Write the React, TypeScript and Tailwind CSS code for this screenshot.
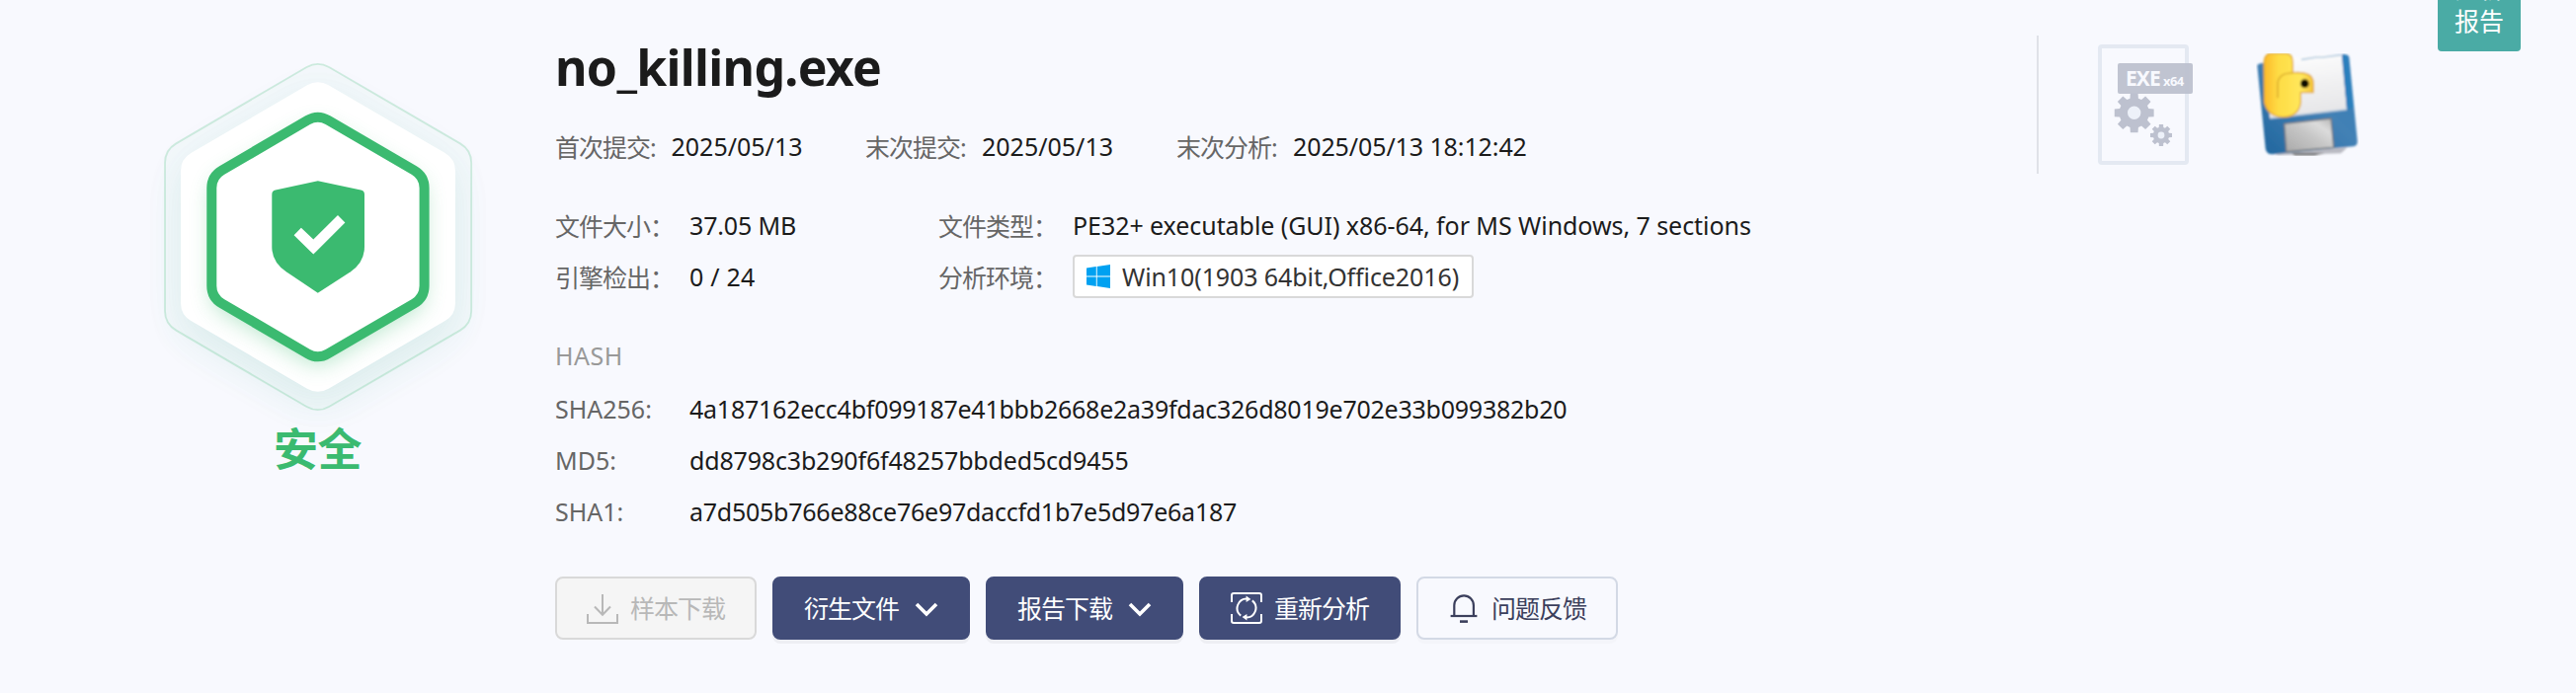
import type { ReactNode } from "react";

const LATIN = "text-[25px] leading-8 whitespace-pre text-[#1b1b1b]";
const LABEL = "pt-0.5 text-[25px] leading-8 font-[370] tracking-[-1px] whitespace-pre text-[#666]";

function SafeBadge() {
  return (
    <svg viewBox="0 0 400 420" className="block h-[420px] w-[400px]">
      <defs>
        <filter id="soft" x="-30%" y="-30%" width="160%" height="160%">
          <feGaussianBlur stdDeviation="20" />
        </filter>
        <filter id="glow" x="-30%" y="-30%" width="160%" height="160%">
          <feGaussianBlur stdDeviation="11" />
        </filter>
        <path
          id="plate"
          d="M63 133 Q63 121 73.4 115 L191 46.3 Q201.8 40 212.6 46.3 L330.6 115 Q341 121 341 133 L341 267 Q341 279 330.6 285 L212.6 353.7 Q201.8 360 191 353.7 L73.4 285 Q63 279 63 267 Z"
        />
        <path
          id="ring"
          d="M94.3 150.5 Q94.3 138.5 104.7 132.5 L191.4 81.8 Q201.8 75.6 212.2 81.8 L299.2 132.5 Q309.6 138.5 309.6 150.5 L309.6 249.5 Q309.6 261.5 299.2 267.5 L212.2 318.2 Q201.8 324.4 191.4 318.2 L104.7 267.5 Q94.3 261.5 94.3 249.5 Z"
        />
      </defs>
      <use href="#plate" transform="translate(0 16)" fill="#3bba70" opacity="0.07" filter="url(#soft)" />
      <use href="#plate" transform="translate(0 10)" fill="#3b8cba" opacity="0.07" filter="url(#soft)" />
      <path
        d="M47 125 Q47 112 58.3 105.4 L190.5 28 Q201.8 21.6 213.1 28 L345.9 105.4 Q357.2 112 357.2 125 L357.2 275 Q357.2 288 345.9 294.6 L213.1 372 Q201.8 378.4 190.5 372 L58.3 294.6 Q47 288 47 275 Z"
        fill="#3bba70"
        fillOpacity="0.02"
        stroke="#3bba70"
        strokeOpacity="0.22"
        strokeWidth="1.8"
      />
      <use href="#plate" fill="#fff" />
      <use href="#ring" transform="translate(0 8)" fill="#3bba70" opacity="0.36" filter="url(#glow)" />
      <use href="#ring" fill="#fff" stroke="#3bba70" strokeWidth="10" />
      <path
        d="M201.8 143.2 L245.4 152.5 Q249 153.4 249 157 V210 Q249 225.5 235 235.3 L201.8 256.8 L169.8 235.3 Q155.3 225.5 155.3 210 V157 Q155.3 153.4 158.9 152.5 Z"
        fill="#3bba70"
      />
      <path d="M177.6 198.2 L184.9 190.8 L197.3 202.6 L222 178 L229.4 185.4 L197.3 217.6 Z" fill="#fff" />
    </svg>
  );
}

function gearPath(cx: number, cy: number, outer: number, inner: number, hole: number) {
  const points: string[] = [];
  for (let i = 0; i < 8; i++) {
    const a = (i * Math.PI) / 4;
    const corners: [number, number][] = [
      [-0.28, inner],
      [-0.19, outer],
      [0.19, outer],
      [0.28, inner],
    ];
    for (const [d, r] of corners) {
      points.push(`${(cx + r * Math.cos(a + d)).toFixed(2)} ${(cy + r * Math.sin(a + d)).toFixed(2)}`);
    }
  }
  return `M${points.join("L")}Z M${cx + hole} ${cy}a${hole} ${hole} 0 1 0 ${-2 * hole} 0a${hole} ${hole} 0 1 0 ${2 * hole} 0Z`;
}

function ExeIcon() {
  return (
    <div className="relative h-[122px] w-[92px] rounded-[4px] border-4 border-[#e4e9f2]">
      <div className="absolute top-[15px] left-4 flex h-[31px] w-[76px] items-baseline rounded-[2px] bg-[#bdc1cf]/95 pl-[8px] font-bold text-[#f8f9fe]">
        <span className="text-[21px] leading-[31px] tracking-[-0.9px]">EXE</span>
        <span className="ml-[3px] text-[13px] leading-[31px] tracking-[-0.5px]">x64</span>
      </div>
      <svg viewBox="0 0 84 114" className="absolute top-0 left-0 h-[114px] w-[84px]">
        <circle cx="32.7" cy="65.3" r="8" fill="#edf1f9" />
        <circle cx="60" cy="88" r="4" fill="#edf1f9" />
        <path d={gearPath(32.7, 65.3, 20.3, 15.2, 6.7)} fill="#bdc1cf" fillRule="evenodd" />
        <path d={gearPath(60, 88, 11.2, 8.2, 3.4)} fill="#bdc1cf" fillRule="evenodd" />
      </svg>
    </div>
  );
}

function FloppyIcon() {
  return (
    <svg viewBox="42 42 312 312" className="block size-[104px]">
      <defs>
        <linearGradient id="disk" x1="0" y1="1" x2="1" y2="0">
          <stop offset="0" stopColor="#1f659d" />
          <stop offset="0.55" stopColor="#4381b5" />
          <stop offset="1" stopColor="#2f7cb8" />
        </linearGradient>
        <linearGradient id="paper" x1="0" y1="0" x2="0.2" y2="1">
          <stop offset="0" stopColor="#ffffff" />
          <stop offset="1" stopColor="#e6e6e8" />
        </linearGradient>
        <linearGradient id="metal" x1="0" y1="1" x2="1" y2="0">
          <stop offset="0" stopColor="#a9a9a9" />
          <stop offset="0.5" stopColor="#c6c6c6" />
          <stop offset="0.75" stopColor="#dcdcdc" />
          <stop offset="1" stopColor="#b4b4b4" />
        </linearGradient>
        <linearGradient id="snake" x1="0" y1="0" x2="1" y2="0">
          <stop offset="0" stopColor="#fdb92a" />
          <stop offset="0.3" stopColor="#fedd45" />
          <stop offset="0.75" stopColor="#ffe75c" />
          <stop offset="1" stopColor="#f6c53a" />
        </linearGradient>
        <filter id="edge" x="-5%" y="-5%" width="110%" height="110%">
          <feGaussianBlur stdDeviation="3" />
        </filter>
      </defs>
      <g filter="url(#edge)">
        <path d="M90 345 L320 328 L300 346 L110 352 Z" fill="#b9bac2" />
        <path d="M150 346 H250 L220 352 H160 Z" fill="#555" />
        <path
          d="M46 80 Q46 74 60 72 L305 45 Q323 44 325 54 L350 308 Q351 322 338 325 L275 331 L92 349 Q74 349 71 332 Z"
          fill="url(#disk)"
        />
        <path d="M68 68 L240 46 L302 44 L318 213 L84 240 Z" fill="url(#paper)" />
        <path d="M304 48 L319 50 L330 130 L338 206 L318 213 Z" fill="#2c7fbd" />
        <path d="M84 240 L318 213" stroke="#a9c3da" strokeWidth="4" />
        <path d="M180 61 L225 54 L245 54 L300 47" stroke="#b4cbe0" strokeWidth="5" fill="none" />
        <path d="M128 256 L270 240 L278 328 L134 341 Z" fill="url(#metal)" stroke="#76797e" strokeWidth="4" />
        <path
          d="M66 76 Q66 44 86 43 H134 Q154 44 154 74 V101 Q216 96 216 132 V161 H178 V190 Q172 236 122 236 Q76 232 67 190 Z"
          fill="url(#snake)"
          stroke="#e0a62f"
          strokeWidth="4"
        />
        <path d="M108 178 V132 Q112 101 154 102" fill="none" stroke="#deb02f" strokeWidth="5" />
        <circle cx="190" cy="134" r="13" fill="#0d0a00" />
      </g>
    </svg>
  );
}

function WindowsIcon() {
  return (
    <svg viewBox="0 0 24 24" className="size-6" fill="#00a1f1">
      <path d="M0 3.4 9.8 2V11.5H0z M10.7 1.9 24 0V11.5H10.7z M0 12.4H9.8V22L0 20.6z M10.7 12.4H24V24L10.7 22.1z" />
    </svg>
  );
}

function DownloadIcon() {
  return (
    <svg viewBox="0 0 32 32" className="size-8" fill="none" stroke="#b8b8b8" strokeWidth="2">
      <path d="M16 2V22.5M8 14.5L16 22.8L24 14.5" />
      <path d="M1 22V31H31V22" />
    </svg>
  );
}

function ChevronIcon() {
  return (
    <svg viewBox="0 0 24 24" className="size-6" fill="none" stroke="#fff" strokeWidth="3.6">
      <path d="M2 8L12 18L22 8" />
    </svg>
  );
}

function RefreshIcon() {
  return (
    <svg viewBox="0 0 32 32" className="size-8" fill="none" stroke="#fff" strokeWidth="2">
      <path d="M1 10V3Q1 1 3 1H29Q31 1 31 3V10M1 22V29Q1 31 3 31H29Q31 31 31 29V22" />
      <path d="M10.2 23.6A9.6 9.6 0 0 1 16.5 6.5M21.8 8.4A9.6 9.6 0 0 1 15.5 25.5" />
      <path d="M15.6 3.4L20.4 6.9L15.6 9.9zM16.4 22.1L11.6 25.1L16.4 28.6z" fill="#fff" stroke="none" />
    </svg>
  );
}

function BellIcon() {
  return (
    <svg viewBox="0 0 32 32" className="size-8" fill="none" stroke="#3b3f5c" strokeWidth="2.2">
      <path d="M6.3 23.6V13.2A9.8 9.8 0 0 1 25.9 13.2V23.6" />
      <path d="M2.6 24H29.4" />
      <path d="M12 29.6H20" strokeWidth="2.6" />
    </svg>
  );
}

function ActionButton({ className, icon, label, trailing }: { className: string; icon: ReactNode; label: string; trailing?: boolean }) {
  return (
    <button className={`flex h-16 items-center rounded-lg border-2 px-[30px] whitespace-nowrap ${className}`}>
      {!trailing && icon}
      <span className="w-24 text-[25px] leading-8 font-[370] tracking-[-1px]">{label}</span>
      {trailing && icon}
    </button>
  );
}

const DARK = "border-[#414c78] bg-[#414c78] text-white shadow-[0_4px_0_rgba(0,0,0,0.045)]";

function HashRow({ name, children }: { name: string; children: ReactNode }) {
  return (
    <div className="flex h-[52px] items-center">
      <span className="w-[136px] text-[25px] leading-8 whitespace-pre text-[#666]">{name}</span>
      {children}
    </div>
  );
}

export default function App() {
  return (
    <div className="flex h-[702px] w-[2608px] overflow-hidden bg-[#f8f9fe] font-['Noto_Sans','Noto_Sans_CJK_SC',sans-serif]">
      <aside className="flex w-[562px] shrink-0 flex-col pt-10 pl-[120px]">
        <SafeBadge />
        <div className="-mt-[29px] w-[403px] text-center text-[45px] leading-[48px] font-bold tracking-[-0.5px] text-[#3bba70]">安全</div>
      </aside>

      <main className="w-[1500px] shrink-0 pt-9">
        <h1 className="h-16 text-[50px] leading-[64px] font-bold tracking-[-0.68px] text-[#1b1b1b]">no_killing.exe</h1>

        <div className="mt-6 flex h-12 items-center">
          <span className={`w-[117.5px] ${LABEL}`}>首次提交:</span>
          <span className={`w-[196.5px] ${LATIN}`}>2025/05/13</span>
          <span className={`w-[118px] ${LABEL}`}>末次提交:</span>
          <span className={`w-[197px] ${LATIN}`}>2025/05/13</span>
          <span className={`w-[118px] ${LABEL}`}>末次分析:</span>
          <span className={`tracking-[-0.1px] ${LATIN}`}>2025/05/13 18:12:42</span>
        </div>

        <div className="mt-[30px] grid h-[104px] grid-cols-[136px_252px_136px_1fr] grid-rows-[52px_52px] items-center">
          <span className={LABEL}>文件大小：</span>
          <span className={`tracking-[-0.15px] ${LATIN}`}>37.05 MB</span>
          <span className={LABEL}>文件类型：</span>
          <span className={`tracking-[-0.06px] ${LATIN}`}>PE32+ executable (GUI) x86-64, for MS Windows, 7 sections</span>
          <span className={LABEL}>引擎检出：</span>
          <span className={`tracking-[0.2px] ${LATIN}`}>0 / 24</span>
          <span className={LABEL}>分析环境：</span>
          <span className="flex h-11 w-[406px] items-center rounded-[4px] border-2 border-[#d9d9d9] bg-white pl-[12px]">
            <WindowsIcon />
            <span className="ml-[12px] text-[25px] leading-8 tracking-[-0.1px] whitespace-pre text-[#333]">Win10(1903 64bit,Office2016)</span>
          </span>
        </div>

        <div className="mt-[38px] h-8 text-[25px] leading-8 tracking-[0.5px] text-[#999]">HASH</div>
        <div className="mt-3">
          <HashRow name="SHA256:">
            <span className={`tracking-[-0.24px] ${LATIN}`}>4a187162ecc4bf099187e41bbb2668e2a39fdac326d8019e702e33b099382b20</span>
          </HashRow>
          <HashRow name="MD5:">
            <span className={`tracking-[-0.17px] ${LATIN}`}>dd8798c3b290f6f48257bbded5cd9455</span>
          </HashRow>
          <HashRow name="SHA1:">
            <span className={`tracking-[-0.25px] ${LATIN}`}>a7d505b766e88ce76e97daccfd1b7e5d97e6a187</span>
          </HashRow>
        </div>

        <div className="mt-10 flex gap-4">
          <ActionButton className="w-[204px] gap-3 border-[#d9d9d9] bg-[#f5f5f5] text-[#b8b8b8]" icon={<DownloadIcon />} label="样本下载" />
          <ActionButton className={`w-[200px] gap-4 ${DARK}`} icon={<ChevronIcon />} label="衍生文件" trailing />
          <ActionButton className={`w-[200px] gap-4 ${DARK}`} icon={<ChevronIcon />} label="报告下载" trailing />
          <ActionButton className={`w-[204px] gap-3 ${DARK}`} icon={<RefreshIcon />} label="重新分析" />
          <ActionButton
            className="w-[204px] gap-3 border-[#d3d9e5] bg-[#f8f9fe] text-[#3b3f5c] shadow-[0_4px_0_rgba(0,0,0,0.015)]"
            icon={<BellIcon />}
            label="问题反馈"
          />
        </div>
      </main>

      <section className="flex shrink-0 items-start pt-9">
        <div className="h-[140px] w-0.5 bg-[#e0e2e8]" />
        <div className="mt-[9px] ml-[60px]">
          <ExeIcon />
        </div>
        <div className="mt-[18px] ml-[68px]">
          <FloppyIcon />
        </div>
      </section>

      <div className="-mt-11 ml-20 flex h-24 w-[84px] shrink-0 flex-col items-center justify-end rounded-[4px] bg-[#4aaba5] pb-[14px] text-[25px] leading-[33px] font-[370] text-white">
        <span>分析</span>
        <span>报告</span>
      </div>
    </div>
  );
}
